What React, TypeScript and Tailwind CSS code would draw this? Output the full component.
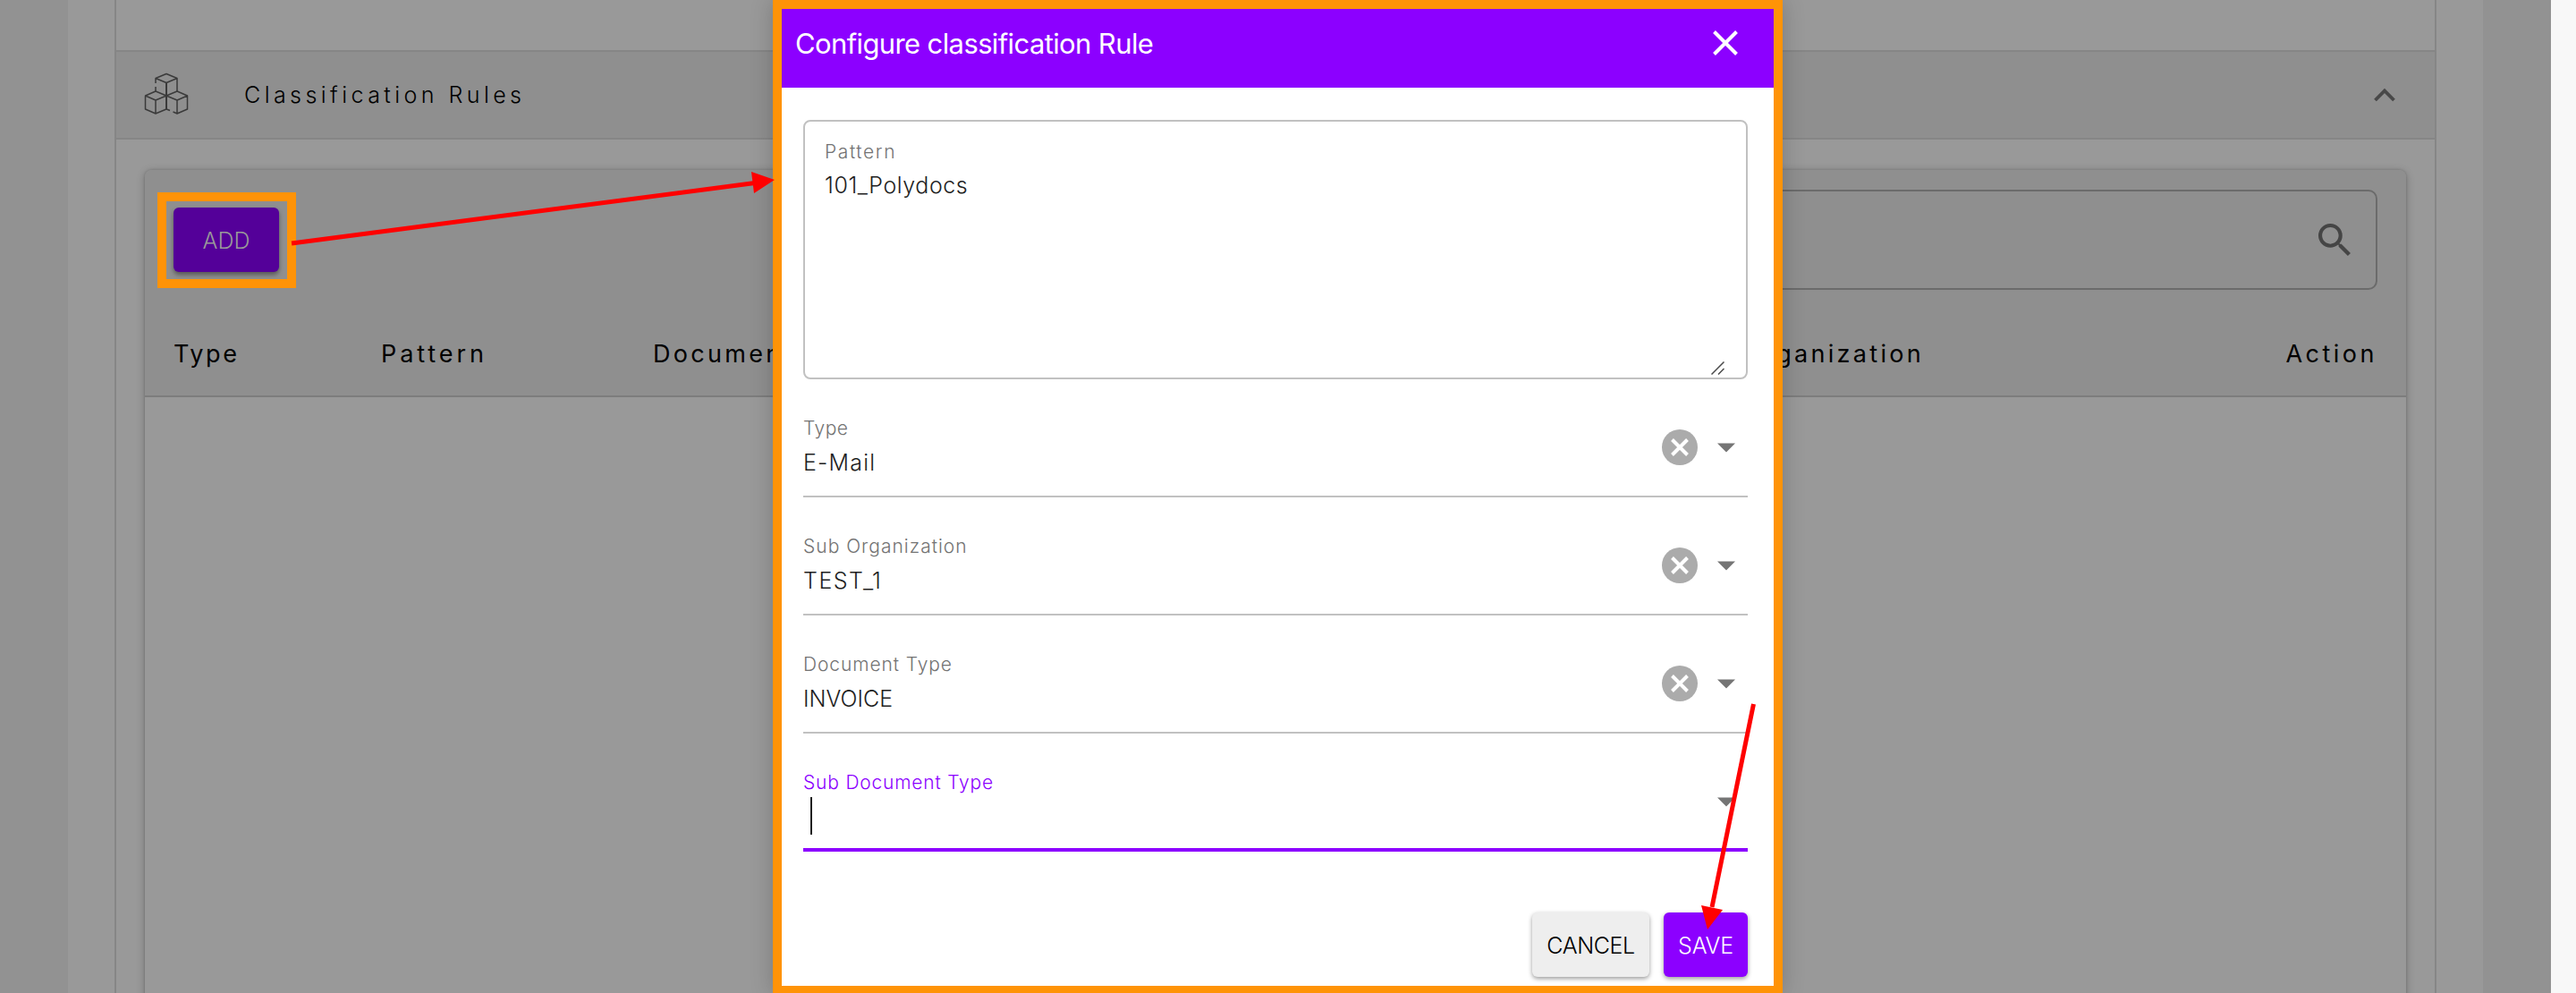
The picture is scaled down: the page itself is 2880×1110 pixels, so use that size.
function CubesIcon() {
  return (
    <svg className="h-[48px] w-[50px]" viewBox="0 0 50 48" fill="none" stroke="#3a3a3a" strokeWidth="1.5" strokeLinejoin="round">
      <path d="M25 2.5 37 7.5 25 12.5 13 7.5ZM37 7.5V22M13 7.5V13M13 17V22" />
      <path d="M13 22 25 27 13 32 1.5 27ZM1.5 27V42L13 47 25 42M13 32V47" />
      <path d="M25 12.5V42" strokeWidth="2" />
      <path d="M37 22 48.500 27 37 32 25 27ZM48.500 27V42L37 47V32M25 42 29 43.500M37 47 32.500 45" />
    </svg>
  );
}

function ClearIcon() {
  return (
    <svg className="size-10" viewBox="0 0 40 40">
      <circle cx="20" cy="20" r="20" fill="#ababab" />
      <path d="M11.500 11.500 28.500 28.500M28.500 11.500 11.500 28.500" stroke="#fff" strokeWidth="4" />
    </svg>
  );
}

type FieldProps = { label: string; labelClass: string; value?: string; valueClass?: string; active?: boolean };

function SelectField({ label, labelClass, value, valueClass = "", active }: FieldProps) {
  return (
    <div className={active ? "flex h-[132px] justify-between border-b-4 border-[#8c00ff]" : "flex h-[132px] justify-between border-b-2 border-[#c1c1c1]"}>
      <div className="pt-[43px]">
        <div className={`h-6 text-[21px] leading-6 ${active ? "text-[#8c00ff]" : "text-[#737373]"} ${labelClass}`}>{label}</div>
        {active ? (
          <div className="mt-1 ml-2 h-[42px] w-0.5 bg-[#1f1f1f]" />
        ) : (
          <div className={`mt-2 h-9 text-[25px] leading-9 text-[#1f1f1f] ${valueClass}`}>{value}</div>
        )}
      </div>
      <div className="mt-14 flex h-10 items-center gap-[22px] self-start pr-3.5">
        {!active && <ClearIcon />}
        <svg className="mt-px h-[11px] w-5" viewBox="0 0 20 11">
          <path d="M0 .5H20L10 10.500Z" fill="#757575" />
        </svg>
      </div>
    </div>
  );
}

function RulesPage() {
  return (
    <div className="flex h-full">
      <div className="w-[76px] bg-[#929292]" />
      <div className="flex w-[2700px] justify-center bg-[#999999]">
        <div className="flex w-[2596px] flex-col border-x-2 border-[#868686]">
          <div className="h-14 shrink-0" />
          <div className="flex h-[100px] shrink-0 items-center border-y-2 border-[#868686] bg-[#8f8f8f] pr-[43px] pl-[31px]">
            <div className="-mt-1">
              <CubesIcon />
            </div>
            <div className="ml-[62px] flex-1 text-[25px] leading-none tracking-[4.450px] text-black">Classification Rules</div>
            <svg className="h-[17px] w-[26px]" viewBox="0 0 26 17" fill="none" stroke="#484848" strokeWidth="3.800">
              <path d="M2.500 14 13 3.500 23.500 14" />
            </svg>
          </div>
          <div className="px-8 pt-[34px]">
            <div className="h-[1000px] rounded-t-lg shadow-[0_2px_8px_2px_rgba(0,0,0,0.16),0_0_3px_rgba(0,0,0,0.2)]">
              <div className="h-[254px] rounded-t-lg border-b-2 border-[#7d7d7d] bg-[#8f8f8f] px-8 pt-[22px]">
                <div className="flex h-28 items-center justify-between">
                  <div className="relative">
                    <button className="flex h-[72px] w-[118px] items-center justify-center rounded-md bg-[#540099] pt-0.5 text-[25px] leading-none text-[#999999] shadow-[0_3px_5px_rgba(0,0,0,0.4)]">ADD</button>
                    <div className="absolute -inset-x-[18px] -inset-y-[17px] h-[107px] w-[155px] border-10 border-[#ff9307]" />
                  </div>
                  <div className="flex h-28 w-[1000px] items-center justify-end rounded-[10px] border-2 border-[#6b6b6b] pr-[28px]">
                    <svg className="size-[36px]" viewBox="3 3 17.500 17.500" fill="#454545">
                      <path d="M15.500 14h-.79l-.28-.27A6.470 6.470 0 0 0 16 9.500 6.500 6.500 0 1 0 9.500 16c1.610 0 3.090-.59 4.230-1.570l.27.28v.79l5 4.990L20.490 19l-4.990-5zm-6 0C7.010 14 5 11.990 5 9.500S7.010 5 9.500 5 14 7.010 14 9.500 11.990 14 9.500 14z" />
                    </svg>
                  </div>
                </div>
                <div className="mt-[52px] flex h-10 items-center text-[27px] leading-10 font-normal text-black">
                  <div className="w-[232px] tracking-[2.600px]">Type</div>
                  <div className="w-[304px] tracking-[3.900px]">Pattern</div>
                  <div className="w-[600px] tracking-[3.300px]">Document Type</div>
                  <div className="w-[821px] text-right tracking-[3.300px]">Sub Organization</div>
                  <div className="flex-1 text-right tracking-[3.500px]">Action</div>
                </div>
              </div>
            </div>
          </div>
        </div>
      </div>
      <div className="w-[76px] bg-[#929292]" />
      <div className="flex-1 bg-[#f8f8f8]" />
    </div>
  );
}

function RuleDialog() {
  return (
    <div className="absolute top-0 left-[864px] flex h-[1112px] w-[1129px] flex-col border-10 border-[#ff9307] bg-white shadow-[0_0_24px_rgba(0,0,0,0.2)]">
      <div className="flex h-[88px] shrink-0 items-start justify-between bg-[#8c00ff] pr-[40px] pl-[15px] text-white">
        <h2 className="pt-[19px] text-[31px] leading-10 font-normal tracking-[-0.620px]">Configure classification Rule</h2>
        <svg className="mt-[24px] size-[28px]" viewBox="0 0 28 28" stroke="#fff" strokeWidth="4">
          <path d="M1.500 1.500 26.500 26.500M26.500 1.500 1.500 26.500" />
        </svg>
      </div>
      <div className="flex flex-col pt-9 pr-[29px] pl-6">
        <div className="relative h-[290px] rounded-lg border-2 border-[#c1c1c1] pt-[22px] pl-[22px]">
          <div className="h-6 text-[21px] leading-6 tracking-[1.600px] text-[#737373]">Pattern</div>
          <div className="mt-[7px] h-9 text-[25px] leading-9 tracking-[0.550px] text-[#1f1f1f]">101_Polydocs</div>
          <svg className="absolute right-[24px] bottom-[3px] size-[15px]" viewBox="0 0 15 15" stroke="#4a4a4a" strokeWidth="1.500">
            <path d="M.5 14.500 14.500 .5M8 14.500 14.500 8" />
          </svg>
        </div>
        <SelectField label="Type" labelClass="tracking-[0.500px]" value="E-Mail" valueClass="tracking-[1.200px]" />
        <SelectField label="Sub Organization" labelClass="tracking-[1px]" value="TEST_1" valueClass="tracking-[1.500px]" />
        <SelectField label="Document Type" labelClass="tracking-[0.900px]" value="INVOICE" />
        <SelectField label="Sub Document Type" labelClass="tracking-[0.800px]" active />
        <div className="mt-[68px] flex justify-end gap-4 text-[25px] leading-none">
          <button className="flex h-[72px] w-[131px] items-center justify-center rounded-md bg-[#eeeeee] pt-0.5 tracking-[-0.400px] text-black shadow-[0_2px_5px_rgba(0,0,0,0.4)]">CANCEL</button>
          <button className="flex h-[72px] w-[94px] items-center justify-center rounded-md bg-[#8c00ff] pt-0.5 tracking-[-0.200px] text-white shadow-[0_2px_5px_rgba(0,0,0,0.4)]">SAVE</button>
        </div>
      </div>
    </div>
  );
}

export default function App() {
  return (
    <div className="relative h-[1110px] w-full overflow-hidden font-['Inter',sans-serif] font-light">
      <RulesPage />
      <RuleDialog />
      <svg className="pointer-events-none absolute inset-0 h-full w-full" viewBox="0 0 2880 1110" fill="#ff0000" stroke="#ff0000">
        <path d="M326 272 844 204.500M1960.500 787 1914 1014" strokeWidth="5" fill="none" />
        <path d="M840 192 866 201 843 216ZM1902 1012 1926 1017 1909 1039Z" stroke="none" />
      </svg>
    </div>
  );
}
